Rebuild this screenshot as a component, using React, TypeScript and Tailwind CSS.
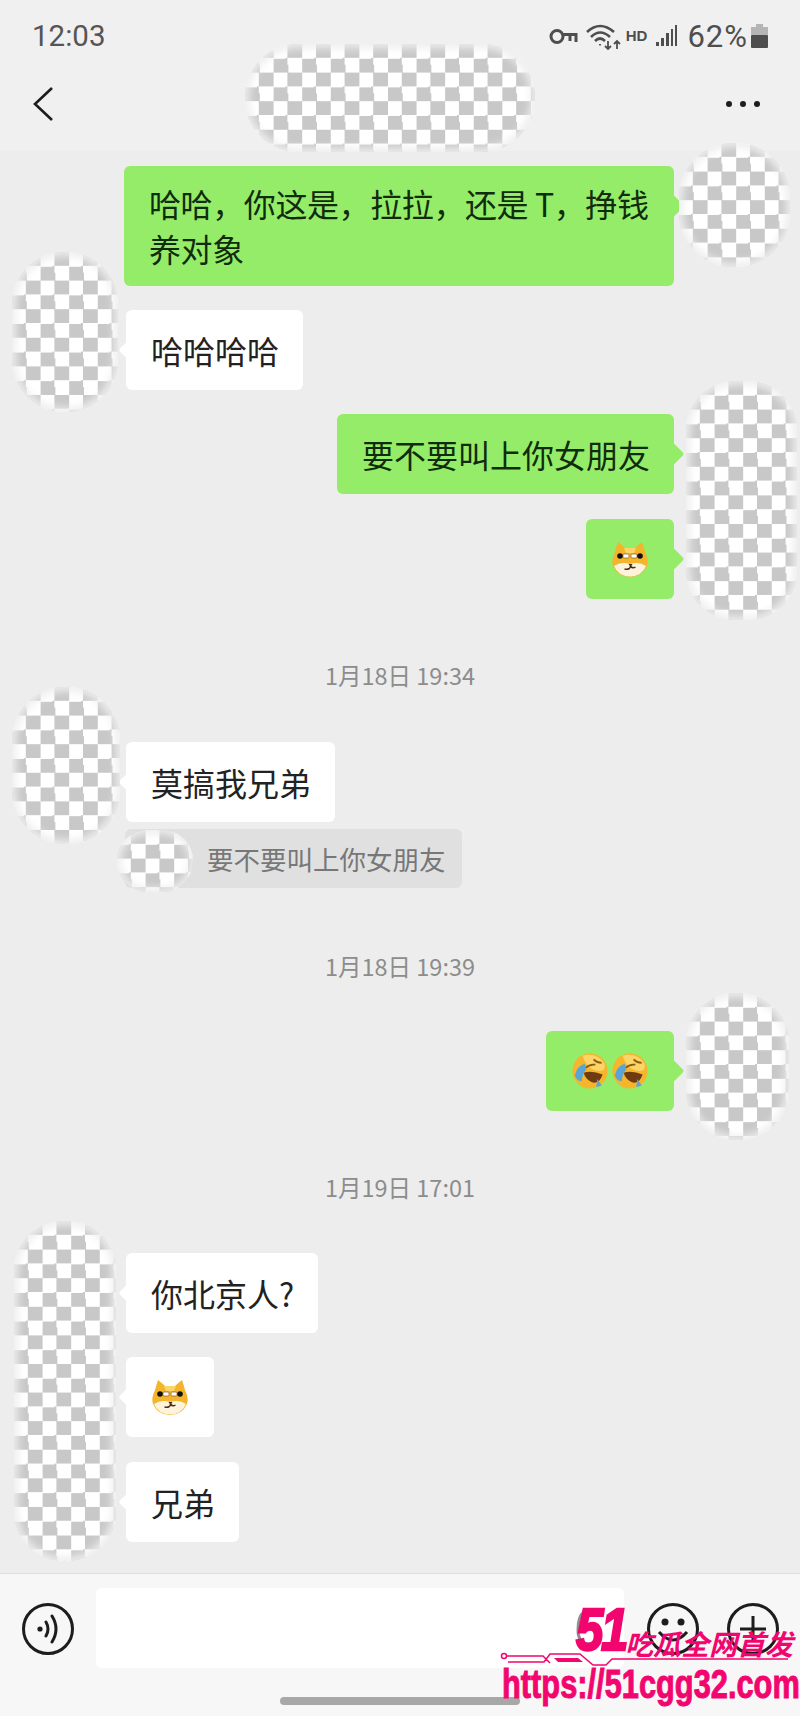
import React from "react";

const cjk = "font-['Noto_Sans_CJK_SC','Noto_Sans',sans-serif]";

// censored patches sit over the avatars and the title
const Blob = ({ className }: { className: string }) => (
  <div
    className={`absolute bg-[conic-gradient(#c8c8c8_25%,#ffffff_0_50%,#c8c8c8_0_75%,#ffffff_0)] bg-size-[28.6px_28.6px] shadow-[inset_0_0_9px_4px_#eeeeee] ${className}`}
  />
);

const DogFace = () => (
  <svg width="40" height="40" viewBox="0 0 40 40">
    <path d="M8 3 Q12 6 15 9 H25 Q28 6 32 3 Q34 9 35 13 Q39 21 37 27 Q32 38 20 38 Q8 38 3 27 Q1 21 5 13 Q6 9 8 3 Z" fill="#f4b52c" />
    <path d="M14 9 H26 L24 14 H16 Z" fill="#fbd566" />
    <path d="M4 27 Q11 22 20 25 Q29 22 36 27 Q32 37 20 37.5 Q8 37 4 27 Z" fill="#fdf3dc" />
    <rect x="13" y="15" width="6" height="4" rx="1" fill="#fff" stroke="#8a5a1c" strokeWidth="0.7" />
    <rect x="21" y="15" width="6" height="4" rx="1" fill="#fff" stroke="#8a5a1c" strokeWidth="0.7" />
    <circle cx="10" cy="17" r="2.8" fill="#111" />
    <circle cx="30" cy="17" r="2.8" fill="#111" />
    <path d="M18.5 25 h4 l-2 3 Z" fill="#4a2a12" />
    <path d="M20.5 27 q0 4 -6 3 M20.5 27 q2 3 5 1" stroke="#4a2a12" strokeWidth="1.4" fill="none" />
  </svg>
);

const LaughCry = () => (
  <svg width="36" height="36" viewBox="0 0 40 40">
    <circle cx="20" cy="20" r="19.5" fill="#f6b62c" />
    <path d="M12 3 Q28 -1 36 12 Q38 20 30 20 Q16 18 12 3 Z" fill="#fbd568" />
    <path d="M14 17 Q20 12 26 13 M24 7 Q28 11 33 11" stroke="#8a5a12" strokeWidth="2" fill="none" />
    <path d="M13 22 Q22 19 34 24 Q30 36 21 32 Q15 29 13 22 Z" fill="#6d3a12" />
    <path d="M3 25 Q6 14 14 12 L16 18 Q11 24 11 31 Q6 32 3 25 Z" fill="#5ba5d6" />
    <path d="M28 29 L33 36 L27 38 Z" fill="#5ba5d6" />
  </svg>
);

const Bubble = ({
  mine,
  className,
  pad = "pl-[25px] pr-[24px]",
  children,
}: {
  mine?: boolean;
  className?: string;
  pad?: string;
  children: React.ReactNode;
}) => (
  <div className={`flex px-[126px] ${mine ? "justify-end" : "justify-start"} ${className ?? ""}`}>
    <div
      className={`relative flex min-h-[80px] items-center rounded-md text-[32px] leading-[45px] ${pad} ${
        mine ? "bg-[#95ec69] text-[#102c0c]" : "bg-white text-[#222222]"
      }`}
    >
      {mine ? (
        <span className="absolute right-[-7px] top-[32px] h-[16px] w-[16px] rotate-45 rounded-[2px] bg-[#95ec69]" />
      ) : (
        <span className="absolute left-[-5px] top-[34px] h-[12px] w-[12px] rotate-45 rounded-[2px] bg-white" />
      )}
      {children}
    </div>
  </div>
);

const TimeLabel = ({ text, className }: { text: string; className: string }) => (
  <div className={`flex h-[34px] items-center justify-center text-[23.5px] text-[#8c8c8c] ${className}`}>
    {text}
  </div>
);

const StatusIcons = () => (
  <div className="flex items-center text-[#4e4e4e]">
    <svg width="29" height="17" viewBox="0 0 29 17" fill="none" stroke="currentColor" strokeWidth="3">
      <circle cx="8" cy="8.5" r="6" />
      <path d="M14 6.5 H27 V14 M21 7 V13" />
    </svg>
    <svg className="ml-[8px]" width="36" height="27" viewBox="0 0 36 27" fill="none" stroke="currentColor" strokeWidth="2.6">
      <path d="M1 9 Q14 -3 28 9 M5 14 Q14 5 24 14 M9 18 Q14 13 19 18" />
      <path d="M14 21 v1.5 M22 18 v8 M19 23 l3 3 3-3 M31 26 v-8 M28 21 l3-3 3 3" strokeWidth="1.8" />
    </svg>
    <span className="ml-[4px] font-['Liberation_Sans',sans-serif] text-[15px] font-bold">HD</span>
    <svg className="ml-[9px]" width="22" height="22" viewBox="0 0 22 22" fill="currentColor">
      <rect x="0" y="17" width="3" height="4" />
      <rect x="5" y="13" width="3" height="8" />
      <rect x="10" y="8" width="3" height="13" />
      <rect x="15" y="4" width="2" height="17" />
      <rect x="19" y="0" width="2" height="21" />
    </svg>
    <span className="ml-[9px] font-['Roboto',sans-serif] text-[31px] leading-none tracking-[1px]">62%</span>
    <svg className="ml-[3px]" width="17" height="24" viewBox="0 0 17 24">
      <rect x="5" y="0" width="7" height="3" fill="#b5b5b5" />
      <rect x="0" y="3" width="17" height="8" fill="#b5b5b5" />
      <rect x="0" y="11" width="17" height="13" rx="1" fill="#4e4e4e" />
    </svg>
  </div>
);

const InputBar = () => (
  <div className="flex h-[143px] items-start border-t border-[#dedede] bg-[#f7f7f7] pt-[14px]">
    <div className="ml-[22px] mt-[15px] flex h-[52px] w-[52px] items-center justify-center rounded-full border-[3px] border-[#1d1d1d]">
      <svg width="26" height="34" viewBox="0 0 26 34" fill="none" stroke="#1d1d1d" strokeWidth="3" strokeLinecap="round">
        <circle cx="5" cy="17" r="2.6" fill="#1d1d1d" stroke="none" />
        <path d="M11 10 Q15 17 11 24 M17 4 Q25 17 17 30" />
      </svg>
    </div>
    <div className="ml-[22px] h-[80px] w-[528px] rounded-md bg-white" />
    <div className="ml-[23px] mt-[15px] flex h-[52px] w-[52px] items-center justify-center rounded-full border-[3px] border-[#1d1d1d]">
      <svg width="46" height="46" viewBox="0 0 46 46" fill="none" stroke="#1d1d1d" strokeWidth="3">
        <circle cx="15" cy="16" r="3.5" fill="#1d1d1d" stroke="none" />
        <circle cx="31" cy="16" r="3.5" fill="#1d1d1d" stroke="none" />
        <path d="M9 26 Q23 42 37 26" />
      </svg>
    </div>
    <div className="ml-[28px] mt-[15px] flex h-[52px] w-[52px] items-center justify-center rounded-full border-[3px] border-[#1d1d1d]">
      <svg width="30" height="30" viewBox="0 0 30 30" stroke="#1d1d1d" strokeWidth="3">
        <path d="M15 2 V28 M2 15 H28" />
      </svg>
    </div>
  </div>
);

const Watermark = () => (
  <div className="absolute left-[500px] top-[1600px] h-[110px] w-[300px] text-[#f2056f]">
    <span className="absolute left-[76px] top-[0px] origin-left scale-x-[0.82] font-['Liberation_Sans',sans-serif] text-[60px] font-bold italic leading-none tracking-[-3px] [-webkit-text-stroke:2.5px_#f2056f]">
      51
    </span>
    <span className={`absolute left-[125px] top-[27px] whitespace-nowrap text-[28px] font-bold italic leading-[32px] ${cjk}`}>
      吃瓜全网首发
    </span>
    <svg className="absolute left-0 top-[50px]" width="300" height="20" viewBox="0 0 300 20" fill="none" stroke="#f2056f" strokeWidth="1.5">
      <circle cx="4" cy="6" r="2.5" />
      <path d="M7 6 H43 L50 13 M8 12 H44 L50 4 H80 L93 15 H106 L112 9 H288" />
      <path d="M54 8 H78 L83 12 H58 Z" fill="#f2056f" stroke="none" />
    </svg>
    <span className="absolute left-[2px] top-[63px] origin-left scale-x-[0.77] whitespace-nowrap font-['Liberation_Sans',sans-serif] text-[40px] font-bold leading-[42px] [-webkit-text-stroke:1px_#f2056f]">
      https://51cgg32.com
    </span>
  </div>
);

export default function App() {
  return (
    <div className={`relative flex h-[1716px] w-[800px] flex-col overflow-hidden bg-[#ededed] ${cjk}`}>
      <div className="h-[151px] shrink-0 bg-[#f0f0f0] px-[32px]">
        <div className="flex h-[72px] items-center justify-between">
          <span className="font-['Roboto',sans-serif] text-[29.5px] text-[#555555]">12:03</span>
          <StatusIcons />
        </div>
        <div className="flex h-[64px] items-center justify-between pr-[8px]">
          <svg width="22" height="36" viewBox="0 0 22 36" fill="none" stroke="#1d1d1d" strokeWidth="2.6">
            <path d="M20 2 L3 18 L20 34" />
          </svg>
          <div className="flex gap-[8px]">
            <span className="h-[6px] w-[6px] rounded-full bg-[#1d1d1d]" />
            <span className="h-[6px] w-[6px] rounded-full bg-[#1d1d1d]" />
            <span className="h-[6px] w-[6px] rounded-full bg-[#1d1d1d]" />
          </div>
        </div>
      </div>

      <div className="flex flex-1 flex-col pt-[15px]">
        <Bubble mine>
          <p className="w-[501px] py-[15px] tracking-[-0.4px]">哈哈，你这是，拉拉，还是 T，挣钱养对象</p>
        </Bubble>
        <Bubble className="mt-[24px]">哈哈哈哈</Bubble>
        <Bubble mine className="mt-[24px]">要不要叫上你女朋友</Bubble>
        <Bubble mine pad="px-[24px]" className="mt-[25px]">
          <DogFace />
        </Bubble>
        <TimeLabel text="1月18日 19:34" className="mt-[60px]" />
        <Bubble className="mt-[49px]">莫搞我兄弟</Bubble>
        <div className="ml-[125px] mt-[7px] flex h-[59px] w-[337px] items-center rounded-md bg-[#e0e0e0] pl-[82px] text-[26.5px] text-[#777777]">
          要不要叫上你女朋友
        </div>
        <TimeLabel text="1月18日 19:39" className="mt-[62px]" />
        <Bubble mine pad="px-[26px]" className="mt-[47px]">
          <div className="flex gap-[4px]">
            <LaughCry />
            <LaughCry />
          </div>
        </Bubble>
        <TimeLabel text="1月19日 17:01" className="mt-[60px]" />
        <Bubble className="mt-[48px]">你北京人?</Bubble>
        <Bubble pad="px-[24px]" className="mt-[24px]">
          <DogFace />
        </Bubble>
        <Bubble className="mt-[25px]">兄弟</Bubble>
      </div>

      <InputBar />

      <div className="absolute bottom-[11px] left-[280px] h-[8px] w-[240px] rounded-full bg-[#a8a8a8]" />

      <Blob className="left-[245px] top-[44px] h-[108px] w-[290px] rounded-[54px]" />
      <Blob className="left-[679px] top-[143px] h-[124px] w-[111px] rounded-[55px]" />
      <Blob className="left-[12px] top-[252px] h-[160px] w-[106px] rounded-[53px]" />
      <Blob className="left-[686px] top-[381px] h-[239px] w-[111px] rounded-[50px]" />
      <Blob className="left-[12px] top-[687px] h-[157px] w-[108px] rounded-[54px]" />
      <Blob className="left-[117px] top-[830px] h-[62px] w-[76px] rounded-[31px]" />
      <Blob className="left-[686px] top-[993px] h-[147px] w-[103px] rounded-[51px]" />
      <Blob className="left-[14px] top-[1221px] h-[340px] w-[102px] rounded-[50px]" />

      <svg className="absolute left-[572px] top-[1610px]" width="32" height="38" viewBox="0 0 32 38" fill="none" stroke="#8f8f8f" strokeWidth="3">
        <path d="M17 2 H12 Q6 6 6 20 Q6 34 18 34 Q28 34 28 26" />
      </svg>
      <Watermark />
    </div>
  );
}
